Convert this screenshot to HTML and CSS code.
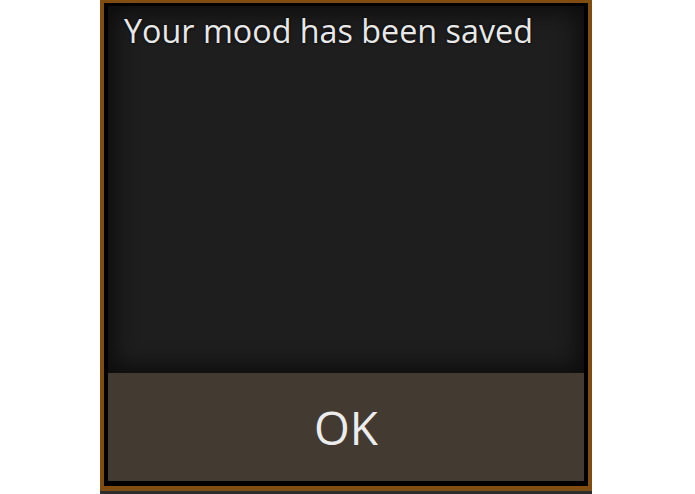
FILE: index.html
```html
<!DOCTYPE html>
<html>
<head>
<meta charset="utf-8">
<link rel="stylesheet" href="styles.css">
</head>
<body>
<div class="frame">
  <div class="panel">
    <div class="message">Your mood has been saved</div>
    <div class="ok-btn">OK</div>
  </div>
</div>
<div class="strip"></div>
</body>
</html>
```
FILE: styles.css
```css
html, body {
  margin: 0;
  padding: 0;
  background: #ffffff;
}
body {
  width: 695px;
  height: 494px;
  overflow: hidden;
  font-family: "Open Sans", "Noto Sans", sans-serif;
}
.frame {
  margin-left: 100px;
  width: 476px;
  height: 475px;
  border-style: solid;
  border-color: #7f4d0f;
  border-width: 3px 4px 5px 4px;
  padding: 3px 4px 5px 4px;
  background: #000;
}
.panel {
  display: flex;
  flex-direction: column;
  width: 476px;
  height: 475px;
}
.message {
  flex: 1;
  background: #1e1e1e;
  box-shadow: inset 0 0 22px 6px #0c0c0c;
  color: #e8e8e8;
  font-size: 32.3px;
  line-height: 38px;
  padding: 5px 0 0 16px;
  text-shadow: 0 0 3px #000;
}
.ok-btn {
  height: 108px;
  background: #433a31;
  color: #ececec;
  font-size: 46px;
  display: flex;
  align-items: center;
  justify-content: center;
}
.strip {
  margin-left: 100px;
  width: 492px;
  height: 3px;
  background: #2e2e2e;
}
```
